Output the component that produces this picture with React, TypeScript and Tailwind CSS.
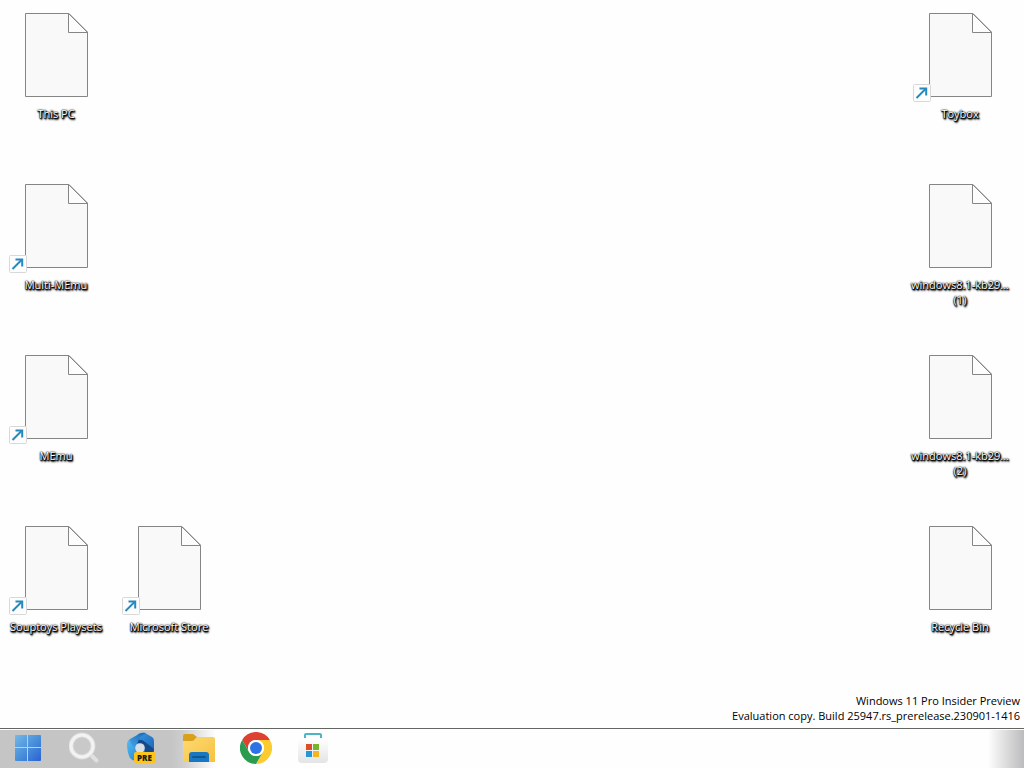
type DesktopItem = {
  name: string
  suffix?: string
  shortcut?: boolean
}

const firstColumn: DesktopItem[] = [
  { name: 'This PC' },
  { name: 'Multi-MEmu', shortcut: true },
  { name: 'MEmu', shortcut: true },
  { name: 'Souptoys Playsets', shortcut: true },
]

const secondColumn: DesktopItem[] = [{ name: 'Microsoft Store', shortcut: true }]

const lastColumn: DesktopItem[] = [
  { name: 'Toybox', shortcut: true },
  { name: 'windows8.1-kb29...', suffix: '(1)' },
  { name: 'windows8.1-kb29...', suffix: '(2)' },
  { name: 'Recycle Bin' },
]

function FileIcon() {
  return (
    <svg width="64" height="84" viewBox="0 0 64 84" fill="none" stroke="#858585">
      <path d="M1.5 .5H45L63.5 19V83.5H1.5Z" fill="#f9f9f9" />
      <path d="M44.5 .5V19.5H63.5Z" fill="#fdfdfd" />
    </svg>
  )
}

function ShortcutArrow() {
  return (
    <svg className="absolute bottom-[-5px] left-[-15px]" width="18" height="18" viewBox="0 0 18 18" fill="none">
      <rect x=".5" y=".5" width="17" height="17" rx="1" fill="#fdfdfd" stroke="#d8d8d8" />
      <path d="M3.5 14L12.5 5" stroke="#2589be" strokeWidth="2" />
      <path d="M6.5 4.5H13.2V11.5" stroke="#2589be" strokeWidth="2" />
    </svg>
  )
}

function DesktopIcon({ item }: { item: DesktopItem }) {
  return (
    <button className="flex h-[171px] w-28 flex-col items-center pt-[13px]">
      <span className="relative block">
        <FileIcon />
        {item.shortcut && <ShortcutArrow />}
      </span>
      <span className="mt-[9px] text-center text-[11px] leading-[15px] font-medium whitespace-nowrap text-white [text-shadow:0_0_1px_#000,0_0_2px_#000,0_1px_1px_#000,1px_1px_1px_#000,1px_1px_2px_#000,1px_2px_2px_#000]">
        {item.name}
        {item.suffix && <span className="block">{item.suffix}</span>}
      </span>
    </button>
  )
}

function StartLogo() {
  return (
    <svg width="26" height="26" viewBox="0 0 26 26">
      <defs>
        <linearGradient id="start" x1="0" y1="0" x2="26" y2="26" gradientUnits="userSpaceOnUse">
          <stop stopColor="#74b9e6" />
          <stop offset=".5" stopColor="#4a90dc" />
          <stop offset="1" stopColor="#2a62d2" />
        </linearGradient>
      </defs>
      <rect width="26" height="26" rx="1" fill="url(#start)" />
      <path d="M12.5 0V26M0 12.5H26" stroke="#b5d0e8" />
    </svg>
  )
}

function SearchLogo() {
  return (
    <svg width="32" height="32" viewBox="0 0 32 32" fill="none" strokeLinecap="round">
      <path d="M21 22L27.5 28.5" stroke="#e0e0e0" strokeWidth="4" />
      <circle cx="13" cy="14" r="11" fill="#c9c9c9" stroke="#dcdcdc" strokeWidth="5" />
      <circle cx="13" cy="14" r="11" stroke="#f3f3f3" strokeWidth="3" />
    </svg>
  )
}

function EdgePreviewLogo() {
  return (
    <svg width="32" height="32" viewBox="0 0 32 32">
      <defs>
        <linearGradient id="blade" x1="1" y1="0" x2="0" y2="1">
          <stop stopColor="#1a64b6" />
          <stop offset="1" stopColor="#4cb2ee" />
        </linearGradient>
        <linearGradient id="panel" x1="0" y1="0" x2="1" y2="1">
          <stop stopColor="#3a9ae6" />
          <stop offset="1" stopColor="#1a5fae" />
        </linearGradient>
        <linearGradient id="sweep" x1="0" y1="0" x2="1" y2="1">
          <stop stopColor="#56bbf2" />
          <stop offset="1" stopColor="#1e7fd2" />
        </linearGradient>
      </defs>
      <path d="M12 2Q16 0 19 1L26 5Q28 6 28 9V18Q28 21 25 22L15 24L9 12Z" fill="url(#panel)" />
      <path d="M11 8Q16 7 19 10L28 17Q28 20 25 22L19 21Q20 13 11 11Z" fill="#14488a" />
      <path d="M13 2Q17 0 20 1Q13 4 12 10Q9 13 11 19L2 13Q1 9 4 7Z" fill="url(#blade)" />
      <path d="M1 12Q1 9 4 8Q4 12 9 16Q11 21 17 21L12 28Q7 30 4 26Q1 20 1 12Z" fill="url(#sweep)" />
      <circle cx="14" cy="16" r="4.8" fill="#d6dfe5" />
      <rect x="8" y="20" width="22" height="11" rx="2" fill="#fdc51b" />
      <text x="18.5" y="29" textAnchor="middle" fontSize="8" fontWeight="800" fontFamily="Open Sans, sans-serif" fill="#201b0a">
        PRE
      </text>
    </svg>
  )
}

function ExplorerLogo() {
  return (
    <svg width="32" height="30" viewBox="0 0 32 30">
      <defs>
        <linearGradient id="folder" x1="0" y1="0" x2="1" y2="1">
          <stop stopColor="#fdda72" />
          <stop offset="1" stopColor="#f6c140" />
        </linearGradient>
      </defs>
      <path d="M0 3Q0 1 2 1H10L14 4H22V10H0Z" fill="#d9a01c" />
      <path d="M0 8H9Q11 8 12 6Q13 4 15 4H30Q32 4 32 6V29H0Z" fill="url(#folder)" />
      <path d="M6 29V22Q6 19 9 19H23Q26 19 26 22V29Z" fill="#1976c0" />
      <path d="M10 24H22" stroke="#0d5794" strokeWidth="2" strokeLinecap="round" />
    </svg>
  )
}

function ChromeLogo() {
  return (
    <svg width="32" height="32" viewBox="0 0 48 48">
      <path d="M3.2 12A24 24 0 0 1 44.8 12H24A12 12 0 0 0 13.6 30Z" fill="#de4032" />
      <path d="M44.8 12A24 24 0 0 1 24 48L34.4 30A12 12 0 0 0 24 12Z" fill="#fccb30" />
      <path d="M24 48A24 24 0 0 1 3.2 12L13.6 30A12 12 0 0 0 34.4 30Z" fill="#2b9b50" />
      <circle cx="24" cy="24" r="12" fill="#fff" />
      <circle cx="24" cy="24" r="9" fill="#2c73e5" />
    </svg>
  )
}

function StoreLogo() {
  return (
    <svg width="32" height="32" viewBox="0 0 32 32">
      <defs>
        <linearGradient id="bag" x1="0" y1="0" x2="0" y2="1">
          <stop stopColor="#fefefe" />
          <stop offset="1" stopColor="#e4e4e4" />
        </linearGradient>
      </defs>
      <path d="M1 7H31V27Q31 31 27 31H5Q1 31 1 27Z" fill="url(#bag)" />
      <path d="M8 6V3Q8 2 9 2H23Q24 2 24 3V6" fill="none" stroke="#4bb5c6" strokeWidth="2" />
      <path d="M9 12H15V18H9Z" fill="#dc4e26" />
      <path d="M16 12H22V18H16Z" fill="#79b52a" />
      <path d="M9 19H15V25H9Z" fill="#2597d6" />
      <path d="M16 19H22V25H16Z" fill="#f5b61e" />
    </svg>
  )
}

const taskbarItems = [
  { label: 'Start', Icon: StartLogo },
  { label: 'Search', Icon: SearchLogo },
  { label: 'Edge preview', Icon: EdgePreviewLogo },
  { label: 'File Explorer', Icon: ExplorerLogo },
  { label: 'Google Chrome', Icon: ChromeLogo },
  { label: 'Microsoft Store', Icon: StoreLogo },
]

export default function App() {
  return (
    <div className="flex min-h-screen flex-col bg-[#fefefe] font-['Open_Sans',sans-serif]">
      <main className="flex flex-1 items-start justify-between pr-2">
        <div className="flex items-end gap-px">
          <div>
            {firstColumn.map(item => (
              <DesktopIcon key={item.name} item={item} />
            ))}
          </div>
          <div>
            {secondColumn.map(item => (
              <DesktopIcon key={item.name} item={item} />
            ))}
          </div>
        </div>
        <div>
          {lastColumn.map(item => (
            <DesktopIcon key={item.name + item.suffix} item={item} />
          ))}
        </div>
      </main>
      <div className="pr-1 pb-[5px] text-right text-[11px] leading-[15px] text-black">
        <p>Windows 11 Pro Insider Preview</p>
        <p>Evaluation copy. Build 25947.rs_prerelease.230901-1416</p>
      </div>
      <footer className="flex h-10 justify-between border-t border-[#626660] bg-[#fefefe] pt-px">
        <nav className="flex bg-linear-to-r from-[#c5c5c5] from-50% via-[#cfcfcf] via-54% to-[#fefefe] to-63%">
          {taskbarItems.map(({ label, Icon }) => (
            <button key={label} aria-label={label} className="flex w-[57px] items-center justify-center pr-0.5 pb-0.5">
              <Icon />
            </button>
          ))}
        </nav>
        <div className="w-9 bg-linear-to-r from-[#fefefe] to-[#bcbcbe]" />
      </footer>
    </div>
  )
}
